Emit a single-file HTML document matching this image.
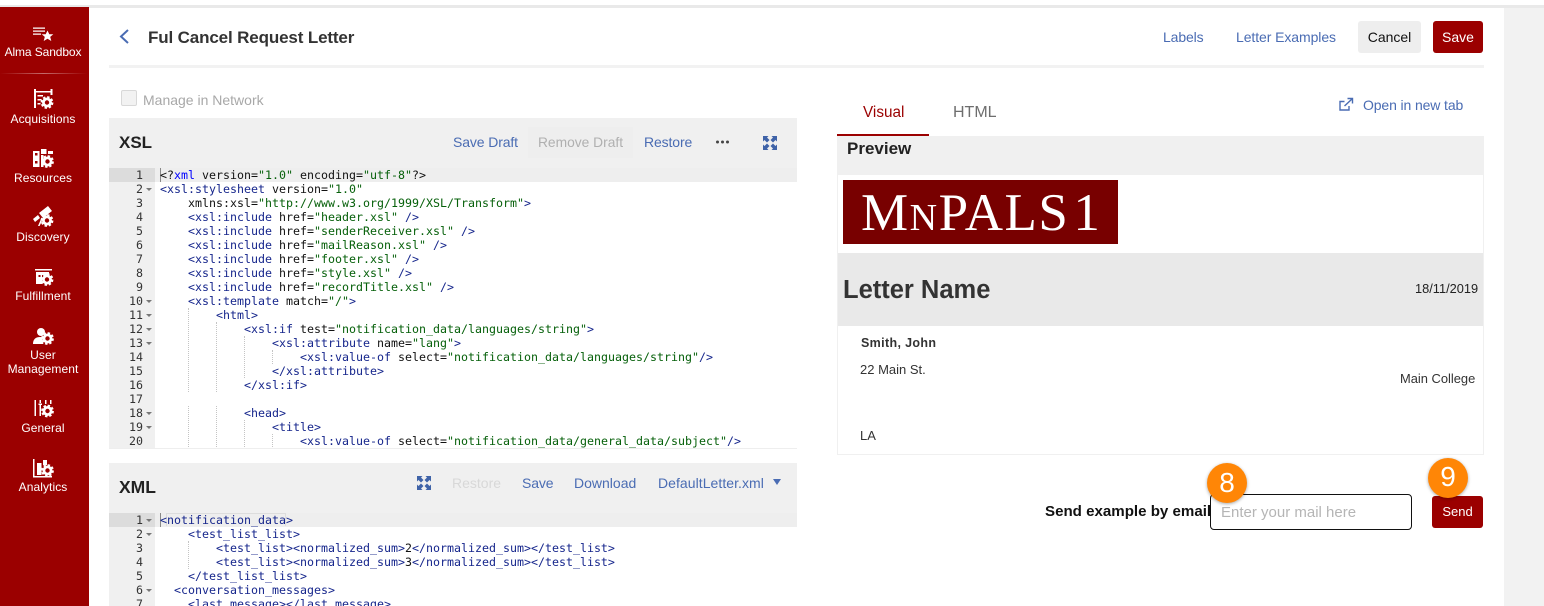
<!DOCTYPE html>
<html><head><meta charset="utf-8"><style>
html,body{margin:0;padding:0;background:#fff}
body{width:1544px;height:606px;position:relative;overflow:hidden;font-family:"Liberation Sans",sans-serif;font-size:14px;color:#222}
.a{position:absolute;white-space:nowrap}
.l{color:#4a6cb3;letter-spacing:-.12px}
.nav{position:absolute;left:0;width:86px;text-align:center;color:#fff;font-size:12px;line-height:14px;letter-spacing:.08px}
.ic{position:absolute}
.code{position:absolute;left:109px;width:688px;overflow:hidden;background:#fff;font-family:"DejaVu Sans Mono","Liberation Mono",monospace;font-size:11.63px;line-height:14px;color:#111}
.gut{position:absolute;left:0;top:0;bottom:0;width:46px;background:#f0f0f0}
.ln{position:absolute;left:0;width:688px;height:14px;white-space:pre}
.n{position:absolute;left:0;width:34px;text-align:right;color:#333}
.f{position:absolute;left:37px;top:6px;width:0;height:0;border-left:3px solid transparent;border-right:3px solid transparent;border-top:3px solid #777}
.x{position:absolute;left:51px}
.x i{font-style:normal;color:#16268c}
.x b{font-weight:normal;color:#06600a}
.g{position:absolute;width:0;border-left:1px dotted #c4c4c4}
</style></head><body>
<div class="a" style="left:0;top:5px;width:1544px;height:3px;background:#e9e9e9"></div>
<div class="a" style="left:1504px;top:8px;width:40px;height:598px;background:#f2f2f2"></div>
<div class="a" style="left:0;top:7px;width:89px;height:599px;background:#9b0000"></div>
<div class="a" style="left:0;top:73px;width:87px;height:1px;background:linear-gradient(90deg,#9b0000,#c46a6a 50%,#9b0000)"></div>

<svg class="ic" style="left:0;top:0" width="89" height="606" fill="#fff">
<defs><g id="gear"><circle r="3.600" fill="none" stroke="#fff" stroke-width="2.800"/><circle r="5.400" fill="none" stroke="#fff" stroke-width="2" stroke-dasharray="2.400 1.840"/></g></defs>
<path d="M33 27.500h12v1.300H33zM33 30.500h12v1.300H33zM33 33.500h8v1.300h-8z"/><path d="M47.500 30.500l1.800 3.700h4l-3.100 2.700 1.100 4.100-3.800-2.200-3.800 2.200 1.100-4.100-3.100-2.700h4z"/>
<path d="M34 89h2v19h-2zM50.500 89h2v6h-2zM36 91h14.500v1.500H36zM37.500 95h5.500v1.500h-5.500zM37.500 99h4v1.500h-4zM37.500 103h3v1.500h-3z"/><use href="#gear" x="47" y="102.500"/>
<path d="M33 151h6.500v16H33zM41 149h5.500v5H41zM48 151h5v3h-5zM41 155h2.500v12H41z"/><rect x="35" y="153" width="2.500" height="2.500" fill="#9b0000"/><rect x="35" y="161" width="2.500" height="2.500" fill="#9b0000"/><use href="#gear" x="47.500" y="161.500"/>
<path d="M39 213l9-7 4 5-9 7zM33 219l5-4 2 3-5 4z"/><path d="M41 219l-3 7h1.600l2.400-5z"/><use href="#gear" x="47" y="220.500"/>
<path d="M35 269h17v1.500H35zM36 272h13v3h-7v9h-6z"/><rect x="38.500" y="275" width="2" height="2" fill="#9b0000"/><use href="#gear" x="47" y="279.500"/>
<circle cx="41" cy="332" r="4"/><path d="M33 344c0-5 3-7 7-7 2 0 3 .5 3 .5-.8 2.500-.5 4.500.5 6.500z"/><use href="#gear" x="47.500" y="338.500"/>
<path d="M34.500 400h1.500v16h-1.500zM39.500 400h1.500v3h-1.500zM38.500 403.500h3.500v1.500h-3.500zM39.500 405h1.500v11h-1.500zM45 400h1.500v4H45zM50 400h1.500v4H50z"/><use href="#gear" x="47.500" y="411"/>
<path d="M33 459h1.500v17H52v1.500H33zM37 463h4.500v12H37zM43 460h4v5h-4z"/><use href="#gear" x="47.500" y="470.500"/>
</svg>
<div class="nav" style="top:45px;letter-spacing:-.1px">Alma Sandbox</div>
<div class="nav" style="top:112px">Acquisitions</div>
<div class="nav" style="top:171px">Resources</div>
<div class="nav" style="top:230px">Discovery</div>
<div class="nav" style="top:289px">Fulfillment</div>
<div class="nav" style="top:348px">User<br>Management</div>
<div class="nav" style="top:421px">General</div>
<div class="nav" style="top:480px">Analytics</div>

<svg class="ic" style="left:118px;top:28px" width="14" height="18" fill="none" stroke="#4a6cb3" stroke-width="2"><path d="M10 2L3 8.500l7 6.500"/></svg>
<div class="a" style="left:148px;top:28px;font-size:17px;line-height:20px;font-weight:bold;color:#333;letter-spacing:-.14px">Ful Cancel Request Letter</div>
<div class="a l" style="left:1163px;top:29px;line-height:16px">Labels</div>
<div class="a l" style="left:1236px;top:29px;line-height:16px;letter-spacing:-.08px">Letter Examples</div>
<div class="a" style="left:1358px;top:21px;width:63px;height:32px;background:#eee;border-radius:3px;text-align:center;line-height:32px;color:#111">Cancel</div>
<div class="a" style="left:1433px;top:21px;width:50px;height:32px;background:#9b0000;border-radius:3px;text-align:center;line-height:32px;color:#fff">Save</div>
<div class="a" style="left:109px;top:65px;width:1375px;height:3px;background:#f2f2f2"></div>

<div class="a" style="left:121px;top:90px;width:14px;height:14px;border:1px solid #d8d8d8;border-radius:2px;background:#f2f2f2"></div>
<div class="a" style="left:143px;top:92px;line-height:16px;color:#a8a8a8">Manage in Network</div>

<div class="a" style="left:109px;top:118px;width:688px;height:50px;background:#f0f0f0"></div>
<div class="a" style="left:119px;top:132px;font-size:17px;line-height:21px;font-weight:bold;color:#222">XSL</div>
<div class="a l" style="left:453px;top:134px;line-height:16px">Save Draft</div>
<div class="a" style="left:528px;top:127px;width:105px;height:31px;background:#eee;text-align:center;line-height:31px;color:#b0b0b0;font-size:13.800px">Remove Draft</div>
<div class="a l" style="left:644px;top:134px;line-height:16px">Restore</div>
<svg class="ic" style="left:715px;top:139px" width="16" height="6" fill="#444"><circle cx="2.500" cy="3" r="1.500"/><circle cx="7.500" cy="3" r="1.500"/><circle cx="12.500" cy="3" r="1.500"/></svg>
<svg class="ic" style="left:763px;top:136px" width="14" height="14" fill="#3f63a8"><path d="M0 0h5.500L4 1.500 6.500 4 4 6.500 1.500 4 0 5.500zM14 0v5.500L12.500 4 10 6.500 7.500 4 10 1.500 8.500 0zM0 14V8.500L1.500 10 4 7.500 6.500 10 4 12.500 5.500 14zM14 14H8.500L10 12.500 7.500 10 10 7.500 12.500 10 14 8.500z"/></svg>

<div class="code" style="top:168px;height:281px;border-bottom:1px solid #eee;box-sizing:border-box">
<div class="gut"></div>
<div class="ln" style="top:0;background:#eee"><span style="position:absolute;left:0;width:46px;height:14px;background:#dcdcdc"></span></div>
<div class="g" style="left:79px;top:140px;height:84px"></div>
<div class="g" style="left:79px;top:238px;height:43px"></div>
<div class="g" style="left:107px;top:154px;height:70px"></div>
<div class="g" style="left:107px;top:238px;height:43px"></div>
<div class="g" style="left:135px;top:168px;height:42px"></div>
<div class="g" style="left:135px;top:252px;height:29px"></div>
<div class="g" style="left:163px;top:182px;height:14px"></div>
<div class="g" style="left:163px;top:266px;height:15px"></div>
<div class="a" style="left:51px;top:0;width:1px;height:14px;background:#888"></div>
<div class="ln" style="top:0"><span class="n">1</span><span class="x">&lt;?<i style="color:#00f">xml</i> version=<b>"1.0"</b> encoding=<b>"utf-8"</b>?&gt;</span></div>
<div class="ln" style="top:14px"><span class="n">2</span><span class="f"></span><span class="x"><i>&lt;xsl:stylesheet</i> version=<b>"1.0"</b></span></div>
<div class="ln" style="top:28px"><span class="n">3</span><span class="x">    xmlns:xsl=<b>"http://www.w3.org/1999/XSL/Transform"</b><i>&gt;</i></span></div>
<div class="ln" style="top:42px"><span class="n">4</span><span class="x">    <i>&lt;xsl:include</i> href=<b>"header.xsl"</b> <i>/&gt;</i></span></div>
<div class="ln" style="top:56px"><span class="n">5</span><span class="x">    <i>&lt;xsl:include</i> href=<b>"senderReceiver.xsl"</b> <i>/&gt;</i></span></div>
<div class="ln" style="top:70px"><span class="n">6</span><span class="x">    <i>&lt;xsl:include</i> href=<b>"mailReason.xsl"</b> <i>/&gt;</i></span></div>
<div class="ln" style="top:84px"><span class="n">7</span><span class="x">    <i>&lt;xsl:include</i> href=<b>"footer.xsl"</b> <i>/&gt;</i></span></div>
<div class="ln" style="top:98px"><span class="n">8</span><span class="x">    <i>&lt;xsl:include</i> href=<b>"style.xsl"</b> <i>/&gt;</i></span></div>
<div class="ln" style="top:112px"><span class="n">9</span><span class="x">    <i>&lt;xsl:include</i> href=<b>"recordTitle.xsl"</b> <i>/&gt;</i></span></div>
<div class="ln" style="top:126px"><span class="n">10</span><span class="f"></span><span class="x">    <i>&lt;xsl:template</i> match=<b>"/"</b><i>&gt;</i></span></div>
<div class="ln" style="top:140px"><span class="n">11</span><span class="f"></span><span class="x">        <i>&lt;html&gt;</i></span></div>
<div class="ln" style="top:154px"><span class="n">12</span><span class="f"></span><span class="x">            <i>&lt;xsl:if</i> test=<b>"notification_data/languages/string"</b><i>&gt;</i></span></div>
<div class="ln" style="top:168px"><span class="n">13</span><span class="f"></span><span class="x">                <i>&lt;xsl:attribute</i> name=<b>"lang"</b><i>&gt;</i></span></div>
<div class="ln" style="top:182px"><span class="n">14</span><span class="x">                    <i>&lt;xsl:value-of</i> select=<b>"notification_data/languages/string"</b><i>/&gt;</i></span></div>
<div class="ln" style="top:196px"><span class="n">15</span><span class="x">                <i>&lt;/xsl:attribute&gt;</i></span></div>
<div class="ln" style="top:210px"><span class="n">16</span><span class="x">            <i>&lt;/xsl:if&gt;</i></span></div>
<div class="ln" style="top:224px"><span class="n">17</span></div>
<div class="ln" style="top:238px"><span class="n">18</span><span class="f"></span><span class="x">            <i>&lt;head&gt;</i></span></div>
<div class="ln" style="top:252px"><span class="n">19</span><span class="f"></span><span class="x">                <i>&lt;title&gt;</i></span></div>
<div class="ln" style="top:266px"><span class="n">20</span><span class="x">                    <i>&lt;xsl:value-of</i> select=<b>"notification_data/general_data/subject"</b><i>/&gt;</i></span></div>
</div>

<div class="a" style="left:109px;top:463px;width:688px;height:50px;background:#f0f0f0"></div>
<div class="a" style="left:119px;top:477px;font-size:17.500px;line-height:21px;font-weight:bold;color:#222">XML</div>
<svg class="ic" style="left:417px;top:476px" width="14" height="14" fill="#3f63a8"><path d="M0 0h5.500L4 1.500 6.500 4 4 6.500 1.500 4 0 5.500zM14 0v5.500L12.500 4 10 6.500 7.500 4 10 1.500 8.500 0zM0 14V8.500L1.500 10 4 7.500 6.500 10 4 12.500 5.500 14zM14 14H8.500L10 12.500 7.500 10 10 7.500 12.500 10 14 8.500z"/></svg>
<div class="a" style="left:452px;top:475px;line-height:16px;color:#d8d8d8">Restore</div>
<div class="a l" style="left:522px;top:475px;line-height:16px">Save</div>
<div class="a l" style="left:574px;top:475px;line-height:16px;letter-spacing:0">Download</div>
<div class="a l" style="left:658px;top:475px;line-height:16px;letter-spacing:.05px">DefaultLetter.xml</div>
<div class="a" style="left:773px;top:479px;width:0;height:0;border-left:4px solid transparent;border-right:4px solid transparent;border-top:6px solid #4a6cb3"></div>

<div class="code" style="top:513px;height:93px">
<div class="gut"></div>
<div class="ln" style="top:0;background:#eee"><span style="position:absolute;left:0;width:46px;height:14px;background:#dcdcdc"></span></div>
<div class="g" style="left:79px;top:28px;height:28px"></div>
<div class="a" style="left:51px;top:0;width:1px;height:14px;background:#888"></div>
<div class="a" style="left:57px;top:0;width:118px;height:12px;border:1px solid #ddd;border-bottom:none"></div>
<div class="ln" style="top:0"><span class="n">1</span><span class="f"></span><span class="x"><i>&lt;notification_data&gt;</i></span></div>
<div class="ln" style="top:14px"><span class="n">2</span><span class="f"></span><span class="x">    <i>&lt;test_list_list&gt;</i></span></div>
<div class="ln" style="top:28px"><span class="n">3</span><span class="x">        <i>&lt;test_list&gt;&lt;normalized_sum&gt;</i>2<i>&lt;/normalized_sum&gt;&lt;/test_list&gt;</i></span></div>
<div class="ln" style="top:42px"><span class="n">4</span><span class="x">        <i>&lt;test_list&gt;&lt;normalized_sum&gt;</i>3<i>&lt;/normalized_sum&gt;&lt;/test_list&gt;</i></span></div>
<div class="ln" style="top:56px"><span class="n">5</span><span class="x">    <i>&lt;/test_list_list&gt;</i></span></div>
<div class="ln" style="top:70px"><span class="n">6</span><span class="f"></span><span class="x">  <i>&lt;conversation_messages&gt;</i></span></div>
<div class="ln" style="top:84px"><span class="n">7</span><span class="x">    <i>&lt;last_message&gt;&lt;/last_message&gt;</i></span></div>
</div>

<div class="a" style="left:863px;top:104px;font-size:15.300px;line-height:18px;color:#9b0000">Visual</div>
<div class="a" style="left:953px;top:104px;font-size:16px;line-height:18px;color:#6e6e6e">HTML</div>
<div class="a" style="left:837px;top:134px;width:92px;height:2px;background:#9b0000"></div>
<svg class="ic" style="left:1338px;top:97px" width="16" height="16" fill="none" stroke="#4a6cb3" stroke-width="1.400"><path d="M11 9v4H2V4.500h4.500"/><path d="M6.500 9L14 2M9.500 1.500H14.500V6.500"/></svg>
<div class="a l" style="left:1363px;top:97px;line-height:16px">Open in new tab</div>

<div class="a" style="left:837px;top:136px;width:647px;height:319px;box-sizing:border-box;border:1px solid #f0f0f0;background:#fff"></div>
<div class="a" style="left:837px;top:136px;width:647px;height:39px;background:#f0f0f0"></div>
<div class="a" style="left:847px;top:139px;font-size:17px;line-height:20px;font-weight:bold;color:#222">Preview</div>
<div class="a" style="left:843px;top:180px;width:275px;height:64px;background:#780000"></div>
<div class="a" style="left:861px;top:183px;font-family:'Liberation Serif',serif;font-size:53px;line-height:60px;color:#fff;letter-spacing:1.500px">M<span style="font-size:38px">N</span>PALS<span style="margin-left:4px">1</span></div>
<div class="a" style="left:838px;top:253px;width:645px;height:73px;background:#e9e9e9"></div>
<div class="a" style="left:843px;top:275px;font-size:25.500px;line-height:30px;font-weight:bold;color:#333">Letter Name</div>
<div class="a" style="left:1415px;top:282px;font-size:12.800px;line-height:14px;color:#222">18/11/2019</div>
<div class="a" style="left:861px;top:336px;font-size:12.500px;line-height:14px;font-weight:bold;color:#333;letter-spacing:.35px">Smith, John</div>
<div class="a" style="left:860px;top:363px;font-size:13px;line-height:14px;color:#333">22 Main St.</div>
<div class="a" style="left:1400px;top:372px;font-size:12.900px;line-height:14px;color:#333">Main College</div>
<div class="a" style="left:860px;top:429px;font-size:13px;line-height:14px;color:#333">LA</div>

<div class="a" style="left:1045px;top:503px;line-height:17px;font-weight:bold;color:#111;font-size:15.100px">Send example by email</div>
<div class="a" style="left:1210px;top:494px;width:200px;height:34px;border:1px solid #111;border-radius:4px;background:#fff"></div>
<div class="a" style="left:1221px;top:504px;font-size:15px;line-height:17px;color:#b5b5b5">Enter your mail here</div>
<div class="a" style="left:1432px;top:496px;width:51px;height:32px;background:#9b0000;border-radius:3px;text-align:center;line-height:32px;color:#fff;font-size:13px">Send</div>
<div class="a" style="left:1207px;top:463px;width:40px;height:40px;border-radius:50%;background:#ff8606;box-shadow:0 1px 3px rgba(0,0,0,.35);text-align:center;line-height:40px;color:#fff;font-size:28px">8</div>
<div class="a" style="left:1428px;top:458px;width:40px;height:40px;border-radius:50%;background:#ff8606;box-shadow:0 1px 3px rgba(0,0,0,.35);text-align:center;line-height:38px;color:#fff;font-size:28px">9</div>
</body></html>
